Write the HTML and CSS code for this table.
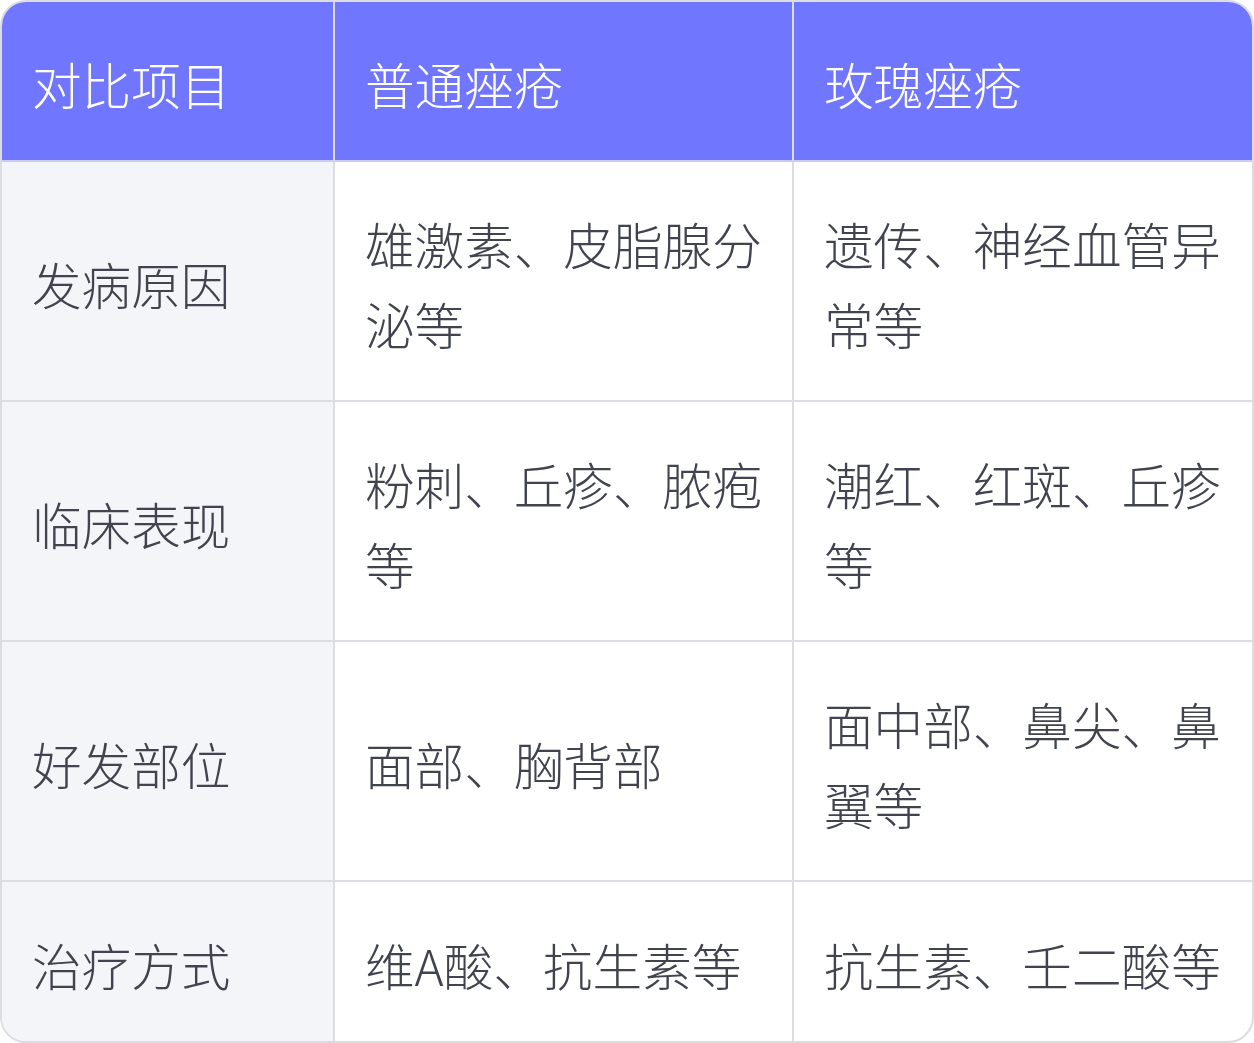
FILE: index.html
```html
<!DOCTYPE html>
<html lang="zh-CN">
<head>
<meta charset="utf-8">
<link rel="stylesheet" href="styles.css">
</head>
<body>
<div class="card">
  <table class="cmp">
    <colgroup>
      <col class="c1"><col class="c2"><col class="c3">
    </colgroup>
    <thead>
      <tr><th>对比项目</th><th>普通痤疮</th><th>玫瑰痤疮</th></tr>
    </thead>
    <tbody>
      <tr><td class="label">发病原因</td><td>雄激素、皮脂腺分泌等</td><td>遗传、神经血管异常等</td></tr>
      <tr><td class="label">临床表现</td><td>粉刺、丘疹、脓疱等</td><td>潮红、红斑、丘疹等</td></tr>
      <tr><td class="label">好发部位</td><td>面部、胸背部</td><td>面中部、鼻尖、鼻翼等</td></tr>
      <tr><td class="label">治疗方式</td><td>维A酸、抗生素等</td><td>抗生素、壬二酸等</td></tr>
    </tbody>
  </table>
</div>
</body>
</html>
```
FILE: styles.css
```css
html, body {
  margin: 0;
  padding: 0;
  background: #ffffff;
}
.card {
  width: 1254px;
  height: 1043px;
  box-sizing: border-box;
  border: 2px solid #dcdde3;
  border-radius: 26px;
  overflow: hidden;
  background: #ffffff;
}
.cmp {
  width: 1250px;
  border-collapse: separate;
  border-spacing: 0;
  table-layout: fixed;
  font-family: "Noto Sans CJK SC", "Noto Sans", sans-serif;
  font-size: 49.6px;
  line-height: 80px;
  font-weight: 300;
}
.c1 { width: 333px; }
.c2 { width: 459px; }
.c3 { width: 458px; }
.cmp th, .cmp td {
  text-align: left;
  vertical-align: middle;
  padding: 41px 20px 37px 30px;
  border-right: 2px solid #dcdde3;
  border-bottom: 2px solid #dcdde3;
}
.cmp th:last-child, .cmp td:last-child {
  border-right: none;
}
.cmp tbody tr:last-child td {
  border-bottom: none;
}
.cmp th {
  background: #7176ff;
  color: #ffffff;
  font-weight: 300;
  border-bottom-color: #c9cbf0;
}
.cmp td {
  color: #41444e;
  height: 160px;
  box-sizing: border-box;
}
.cmp td.label {
  background: #f4f5f9;
}
```
